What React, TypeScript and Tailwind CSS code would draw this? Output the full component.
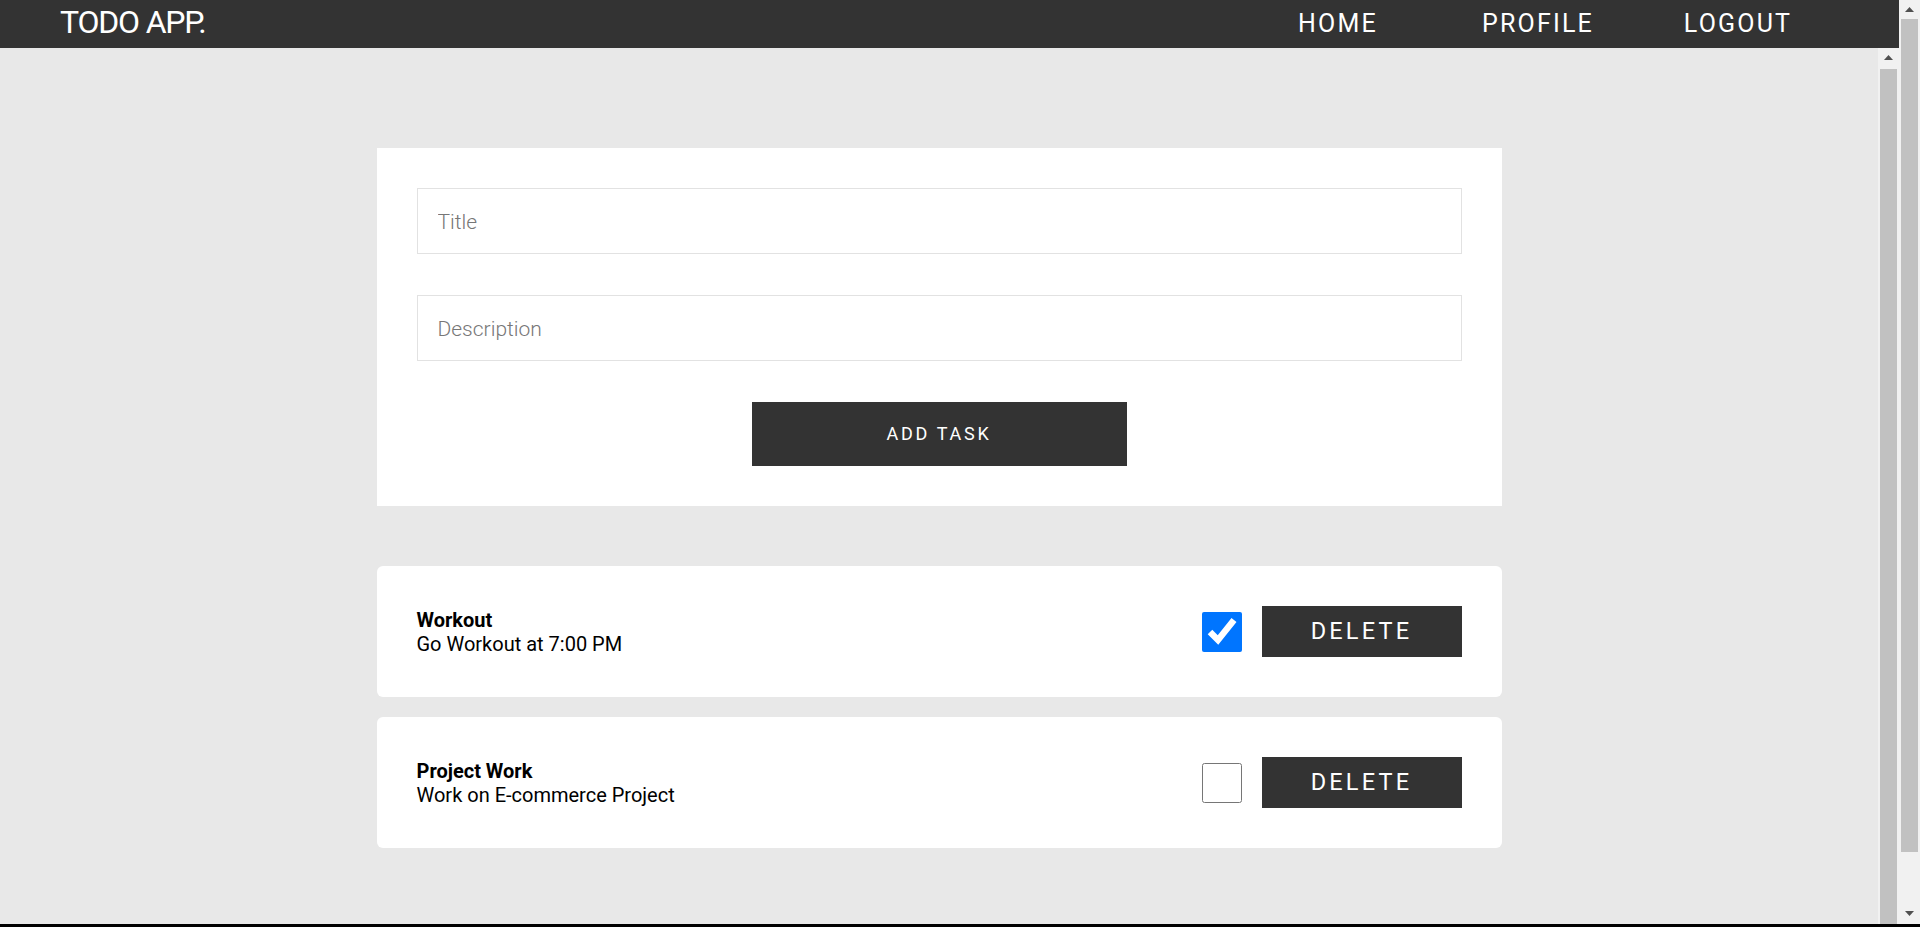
import React, { useState } from 'react';

interface Task {
  id: number;
  title: string;
  description: string;
  done: boolean;
}

const initialTasks: Task[] = [
  { id: 1, title: 'Workout', description: 'Go Workout at 7:00 PM', done: true },
  { id: 2, title: 'Project Work', description: 'Work on E-commerce Project', done: false },
];

const ArrowUp = () => (
  <svg width="9" height="5" viewBox="0 0 9 5">
    <path d="M0 5 L4.5 0 L9 5 Z" fill="#505050" />
  </svg>
);

const ArrowDown = () => (
  <svg width="9" height="5" viewBox="0 0 9 5">
    <path d="M0 0 L4.5 5 L9 0 Z" fill="#505050" />
  </svg>
);

export default function App() {
  const [tasks, setTasks] = useState<Task[]>(initialTasks);
  const [title, setTitle] = useState('');
  const [description, setDescription] = useState('');

  const addTask = () => {
    if (!title.trim()) return;
    setTasks([...tasks, { id: Date.now(), title, description, done: false }]);
    setTitle('');
    setDescription('');
  };

  const toggle = (id: number) =>
    setTasks(tasks.map((t) => (t.id === id ? { ...t, done: !t.done } : t)));

  const remove = (id: number) => setTasks(tasks.filter((t) => t.id !== id));

  return (
    <div className="flex h-[927px] w-full flex-col overflow-hidden font-['Roboto',sans-serif]">
      <div className="flex min-h-0 flex-1">
        <div className="flex min-w-0 flex-1 flex-col">
          {/* Navbar */}
          <header className="flex h-[48px] shrink-0 items-center justify-between bg-[#333333] pl-[60px] pr-[61px] text-white">
            <div className="pb-[4px] text-[32px] tracking-[-1.2px]">TODO APP.</div>
            <nav className="flex">
              <a className="w-[200px] text-center text-[25px] tracking-[2.2px]">HOME</a>
              <a className="w-[200px] text-center text-[25px] tracking-[2.2px]">PROFILE</a>
              <a className="w-[200px] text-center text-[25px] tracking-[2.2px]">LOGOUT</a>
            </nav>
          </header>

          <div className="flex min-h-0 flex-1">
            {/* Content */}
            <main className="flex min-w-0 flex-1 flex-col items-center bg-[#e8e8e8] pt-[100px]">
              <div className="flex w-[1125px] flex-col gap-[41px] bg-white p-[40px]">
                <input
                  value={title}
                  onChange={(e) => setTitle(e.target.value)}
                  placeholder="Title"
                  className="h-[66px] w-full border border-[#e2e2e2] px-[20px] pt-[2px] text-[21px] font-light text-[#222] outline-none placeholder:text-[#777]"
                />
                <input
                  value={description}
                  onChange={(e) => setDescription(e.target.value)}
                  placeholder="Description"
                  className="h-[66px] w-full border border-[#e2e2e2] px-[20px] pt-[2px] text-[21px] font-light text-[#222] outline-none placeholder:text-[#777]"
                />
                <div className="flex justify-center">
                  <button
                    onClick={addTask}
                    className="h-[64px] w-[375px] bg-[#333333] pb-[1px] text-[18px] tracking-[2.7px] text-white"
                  >
                    ADD TASK
                  </button>
                </div>
              </div>

              <div className="mt-[60px] flex w-[1125px] flex-col gap-[20px]">
                {tasks.map((task) => (
                  <div
                    key={task.id}
                    className="flex h-[131px] items-center justify-between rounded-[6px] bg-white px-[40px]"
                  >
                    <div className="flex flex-col text-[20px] leading-[24px] text-black">
                      <span className="font-bold">{task.title}</span>
                      <span>{task.description}</span>
                    </div>
                    <div className="flex items-center gap-[20px]">
                      <input
                        type="checkbox"
                        checked={task.done}
                        onChange={() => toggle(task.id)}
                        className="m-0 h-[40px] w-[40px]"
                      />
                      <button
                        onClick={() => remove(task.id)}
                        className="h-[51px] w-[200px] bg-[#333333] text-[23.5px] tracking-[3.2px] text-white"
                      >
                        DELETE
                      </button>
                    </div>
                  </div>
                ))}
              </div>
            </main>

            {/* Inner scrollbar */}
            <div className="flex w-[21px] shrink-0 flex-col bg-[#f1f1f1]">
              <div className="flex h-[21px] items-center justify-center pb-[2px]">
                <ArrowUp />
              </div>
              <div className="mx-[2px] flex-1 bg-[#c1c1c1]" />
            </div>
          </div>
        </div>

        {/* Outer scrollbar */}
        <div className="flex w-[21px] shrink-0 flex-col bg-[#f1f1f1]">
          <div className="flex h-[19px] items-center justify-center">
            <ArrowUp />
          </div>
          <div className="mx-[2px] h-[833px] bg-[#c1c1c1]" />
          <div className="flex-1" />
          <div className="flex h-[21px] items-center justify-center">
            <ArrowDown />
          </div>
        </div>
      </div>
      <div className="h-[3px] shrink-0 bg-black" />
    </div>
  );
}
